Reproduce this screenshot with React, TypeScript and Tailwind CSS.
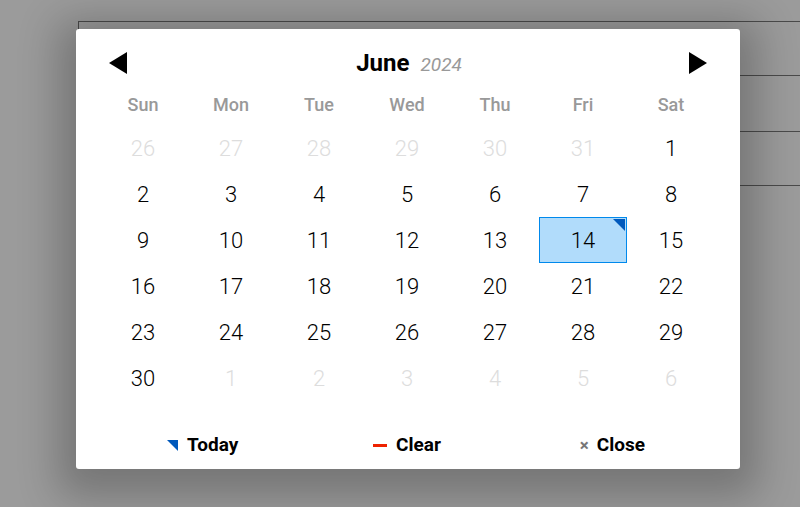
import React from 'react';

const WEEKDAYS = ['Sun', 'Mon', 'Tue', 'Wed', 'Thu', 'Fri', 'Sat'];

type Day = { n: number; outside?: boolean; selected?: boolean };

const buildDays = (): Day[] => {
  const days: Day[] = [];
  for (let n = 26; n <= 31; n++) days.push({ n, outside: true });
  for (let n = 1; n <= 30; n++) days.push({ n, selected: n === 14 });
  for (let n = 1; n <= 6; n++) days.push({ n, outside: true });
  return days;
};

const Arrow: React.FC<{ dir: 'left' | 'right' }> = ({ dir }) => (
  <svg width="18" height="22" viewBox="0 0 18 22">
    {dir === 'left' ? <polygon points="18,0 18,22 0,11" fill="#000" /> : <polygon points="0,0 0,22 18,11" fill="#000" />}
  </svg>
);

const App: React.FC = () => {
  const days = buildDays();
  return (
    <div
      className="relative w-[800px] h-[507px] overflow-hidden bg-[#9b9b9b]"
      style={{ fontFamily: 'Roboto, "Liberation Sans", sans-serif' }}
    >
      {/* form behind the overlay */}
      <div className="absolute left-[78px] top-[21px] w-[760px] h-[165px] border border-[#4a4a4a] flex flex-col">
        <div className="h-[54px] border-b border-[#4a4a4a]" />
        <div className="h-[56px] border-b border-[#4a4a4a]" />
        <div className="flex-1" />
      </div>

      {/* picker */}
      <div className="absolute left-[76px] top-[29px] w-[664px] h-[440px] bg-white rounded-[3px] pl-[23px] pr-[25px] shadow-[0_10px_40px_18px_rgba(0,0,0,0.24)]">
        <div className="mt-[11px] h-[46px] flex items-center justify-between pl-[10px] pr-[8px]">
          <Arrow dir="left" />
          <div className="flex items-baseline gap-[11px] ml-[2px]">
            <span className="text-[24px] font-bold text-black">June</span>
            <span className="text-[19px] italic text-[#999]">2024</span>
          </div>
          <Arrow dir="right" />
        </div>

        <div className="mt-[3px] h-[30px] grid grid-cols-7 items-center">
          {WEEKDAYS.map((w) => (
            <div key={w} className="text-center text-[18px] font-medium text-[#999] leading-none pt-[2px]">
              {w}
            </div>
          ))}
        </div>

        <div className="mt-[6px] grid grid-cols-7">
          {days.map((d, i) => (
            <div
              key={i}
              className={
                d.selected
                  ? 'relative h-[46px] flex items-center justify-center bg-[#b1dcfb] border border-[#0089ec] text-[22px] font-light text-black'
                  : d.outside
                  ? 'h-[46px] flex items-center justify-center text-[22px] font-light text-[#ddd]'
                  : 'h-[46px] flex items-center justify-center text-[22px] font-light text-black'
              }
            >
              {d.n}
              {d.selected && (
                <span className="absolute top-[1px] right-[1px] w-0 h-0 border-t-[12px] border-l-[12px] border-t-[#0059bc] border-l-transparent" />
              )}
            </div>
          ))}
        </div>

        <div className="mt-[24px] h-[40px] grid grid-cols-3 items-center text-[19px] font-bold text-black">
          <div className="flex items-center justify-center gap-[9px] pl-[2px]">
            <span className="w-0 h-0 border-t-[11px] border-l-[11px] border-t-[#0059bc] border-l-transparent" />
            <span>Today</span>
          </div>
          <div className="flex items-center justify-center gap-[9px]">
            <span className="w-[14px] h-[3px] bg-[#e20]" />
            <span>Clear</span>
          </div>
          <div className="flex items-center justify-center gap-[8px]">
            <span className="text-[17px] text-[#777] leading-none">×</span>
            <span>Close</span>
          </div>
        </div>
      </div>
    </div>
  );
};

export default App;
